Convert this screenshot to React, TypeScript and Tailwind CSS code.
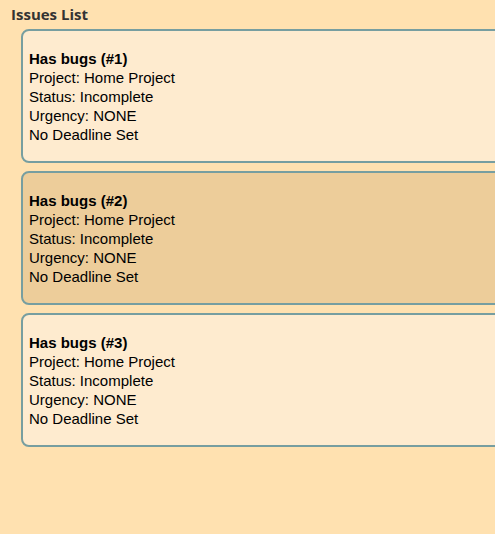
const issues = [
  { id: 1, title: 'Has bugs', project: 'Home Project', status: 'Incomplete', urgency: 'NONE', selected: false },
  { id: 2, title: 'Has bugs', project: 'Home Project', status: 'Incomplete', urgency: 'NONE', selected: true },
  { id: 3, title: 'Has bugs', project: 'Home Project', status: 'Incomplete', urgency: 'NONE', selected: false },
];

export default function App() {
  return (
    <div className="w-[495px] h-[534px] overflow-hidden bg-[#ffe1b0] font-['Liberation_Sans',Arial,sans-serif]">
      <h2 className="pl-[11px] pt-[5px] text-[15px] leading-[19px] font-bold text-[#333333] font-['Open_Sans',sans-serif]">
        Issues List
      </h2>

      {/* issue cards run past the right edge */}
      <div className="flex flex-col gap-[8px] pl-[21px] pt-[5px] w-[520px]">
        {issues.map((issue) => (
          <div
            key={issue.id}
            className={
              issue.selected
                ? 'rounded-[8px] border-2 border-[#779ea0] bg-[#edcd9a] px-[6px] pt-[18px] pb-[17px] text-[15px] leading-[19px] text-black'
                : 'rounded-[8px] border-2 border-[#779ea0] bg-[#feebcf] px-[6px] pt-[18px] pb-[17px] text-[15px] leading-[19px] text-black'
            }
          >
            <div className="font-bold">
              {issue.title} (#{issue.id})
            </div>
            <div>Project: {issue.project}</div>
            <div>Status: {issue.status}</div>
            <div>Urgency: {issue.urgency}</div>
            <div>No Deadline Set</div>
          </div>
        ))}
      </div>
    </div>
  );
}
